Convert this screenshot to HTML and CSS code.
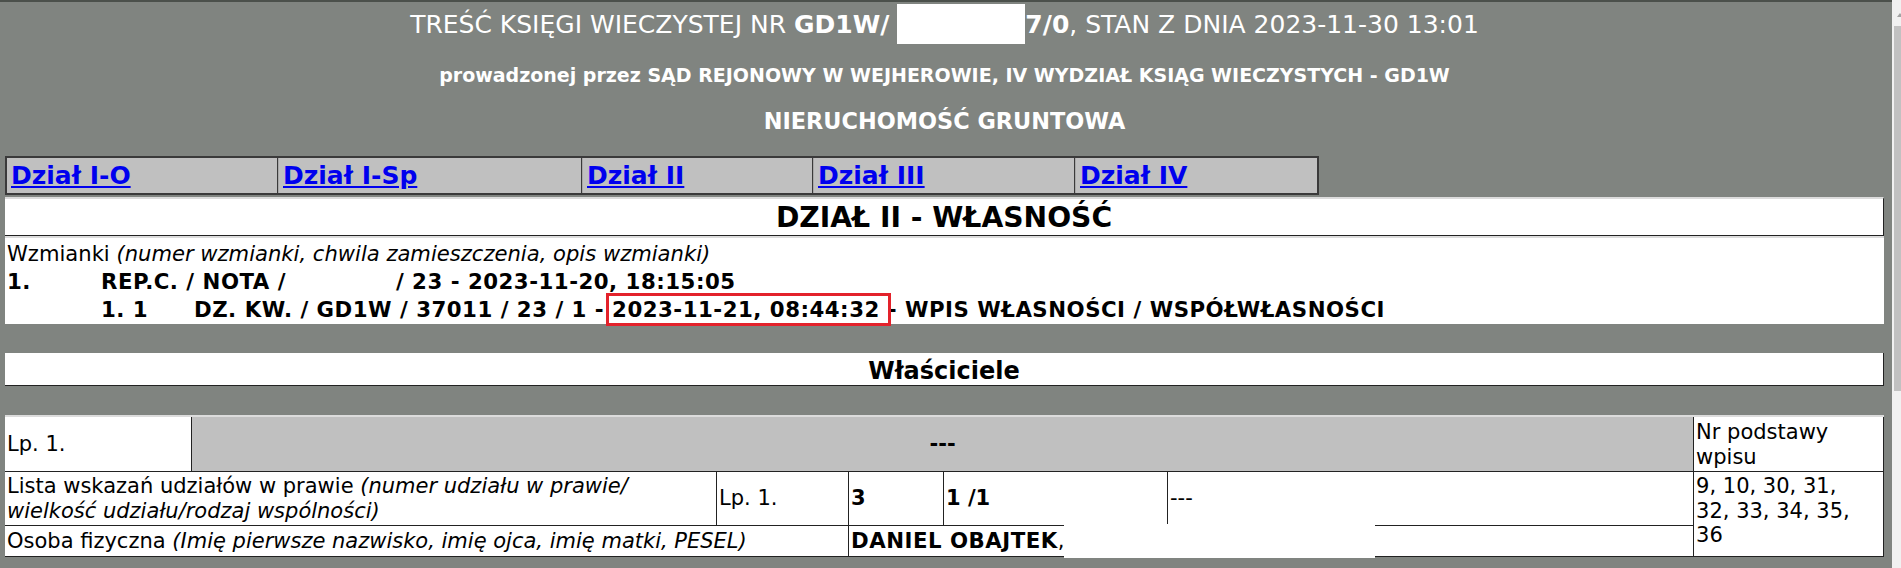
FILE: index.html
```html
<!DOCTYPE html>
<html lang="pl">
<head>
<meta charset="utf-8">
<title>Treść księgi wieczystej</title>
<link rel="stylesheet" href="styles.css">
</head>
<body>
<div class="scrollbar"><span class="scroll-arrow"></span><span class="scroll-thumb"></span></div>
<div class="page">
  <header class="doc-head">
    <h1 class="title">TREŚĆ KSIĘGI WIECZYSTEJ NR <b>GD1W/<span class="redact"></span>7/0</b>, STAN Z DNIA 2023-11-30 13:01</h1>
    <p class="court">prowadzonej przez SĄD REJONOWY W WEJHEROWIE, IV WYDZIAŁ KSIĄG WIECZYSTYCH - GD1W</p>
    <p class="kind">NIERUCHOMOŚĆ GRUNTOWA</p>
  </header>

  <nav class="tabs">
    <div class="tab t1"><a href="#">Dział I-O</a></div>
    <div class="tab t2"><a href="#">Dział I-Sp</a></div>
    <div class="tab t3"><a href="#">Dział II</a></div>
    <div class="tab t4"><a href="#">Dział III</a></div>
    <div class="tab t5"><a href="#">Dział IV</a></div>
  </nav>

  <div class="section-head">DZIAŁ II - WŁASNOŚĆ</div>

  <div class="wzmianki">
    <div class="wz-row wz-label">Wzmianki <i>(numer wzmianki, chwila zamieszczenia, opis wzmianki)</i></div>
    <div class="wz-row wz-entry">
      <span>1.</span>
      <span class="wz-wide">REP.C. / NOTA / <span class="blank"></span> / 23 - 2023-11-20, 18:15:05</span>
    </div>
    <div class="wz-row wz-entry">
      <span></span>
      <span>1. 1</span>
      <span>DZ. KW. / GD1W / 37011 / 23 / 1 - <span class="mark">2023-11-21, 08:44:32</span> - WPIS WŁASNOŚCI / WSPÓŁWŁASNOŚCI</span>
    </div>
  </div>

  <div class="sub-head">Właściciele</div>

  <table class="owners">
    <colgroup>
      <col class="ca"><col class="cb"><col class="cc"><col class="cd"><col class="ce"><col class="cf"><col class="cg">
    </colgroup>
    <tr class="r1">
      <td>Lp. 1.</td>
      <td colspan="5" class="grey"><b>---</b></td>
      <td>Nr podstawy wpisu</td>
    </tr>
    <tr class="r2">
      <td colspan="2">Lista wskazań udziałów w prawie <i>(numer udziału w prawie/ wielkość udziału/rodzaj wspólności)</i></td>
      <td>Lp. 1.</td>
      <td><b>3</b></td>
      <td><b>1 /1</b></td>
      <td>---</td>
      <td rowspan="2" class="basis">9, 10, 30, 31, 32, 33, 34, 35, 36</td>
    </tr>
    <tr class="r3">
      <td colspan="3">Osoba fizyczna <i>(Imię pierwsze nazwisko, imię ojca, imię matki, PESEL)</i></td>
      <td colspan="3"><b class="name">DANIEL OBAJTEK</b>,<span class="redact-name"></span></td>
    </tr>
  </table>
</div>
</body>
</html>
```
FILE: styles.css
```css
html, body {
  margin: 0;
  padding: 0;
  overflow: hidden;
}

body {
  background: #808480;
  border-top: 2px solid #4b504b;
  font-family: "DejaVu Sans", Verdana, sans-serif;
  color: #000;
  height: 566px;
}

.page {
  padding: 0 17px 0 5px;
}

/* ---------- header ---------- */
.doc-head {
  color: #fff;
  text-align: center;
}

.title {
  margin: 9px 0 0;
  font-size: 25px;
  line-height: 28px;
  font-weight: normal;
}

.redact {
  display: inline-block;
  width: 136px;
  height: 20px;
  position: relative;
}

.redact::after {
  content: "";
  position: absolute;
  left: 8px;
  right: 0;
  top: -9px;
  bottom: -11px;
  background: #fff;
}

.court {
  margin: 25px 0 0;
  font-size: 19px;
  line-height: 22px;
  font-weight: bold;
}

.kind {
  margin: 23px 0 0;
  font-size: 22.4px;
  line-height: 25px;
  font-weight: bold;
}

/* ---------- tabs ---------- */
.tabs {
  margin-top: 22px;
  display: grid;
  grid-template-columns: 270px 304px 231px 262px 243px;
  width: max-content;
  border: 2px solid #3a3a3a;
  background: #c0c0c0;
}

.tab {
  box-sizing: border-box;
  padding: 4px 4px 3px 5px;
  font-size: 25px;
  line-height: 28px;
  font-weight: bold;
  border-left: 1px solid #3a3a3a;
  box-shadow: inset 1px 0 0 #a8a8a8;
}

.tab.t1 {
  border-left: 0;
  padding-left: 4px;
  box-shadow: none;
}

.tab a {
  color: #0000ee;
  text-decoration: underline;
}

/* ---------- section heads ---------- */
.section-head {
  margin-top: 2px;
  background: #fff;
  border-top: 2px solid #dcdcdc;
  border-right: 1px solid #222;
  border-bottom: 1px solid #222;
  padding: 3px 0 2px;
  text-align: center;
  font-size: 28.2px;
  line-height: 31px;
  font-weight: bold;
}

.sub-head {
  margin-top: 29px;
  background: #fff;
  border-right: 1px solid #222;
  border-bottom: 1px solid #222;
  padding: 4px 0 0;
  text-align: center;
  font-size: 24px;
  line-height: 28px;
  font-weight: bold;
}

/* ---------- wzmianki ---------- */
.wzmianki {
  background: #fff;
  border-top: 2px solid #dcdcdc;
  padding: 2px 0 0 2px;
  font-size: 21.1px;
}

.wz-row {
  height: 28px;
  line-height: 28px;
  white-space: nowrap;
}

.wz-entry {
  display: grid;
  grid-template-columns: 94px 93px 1fr;
  font-weight: bold;
  font-size: 21.3px;
  letter-spacing: 0.5px;
}

.wz-wide {
  grid-column: 2 / 4;
}

.blank {
  display: inline-block;
  width: 94px;
}

.mark {
  position: relative;
}

.mark::after {
  content: "";
  position: absolute;
  left: -6px;
  right: -11px;
  top: -4px;
  bottom: -4px;
  border: 3px solid #e3222b;
}

/* ---------- owners table ---------- */
.owners {
  margin-top: 29px;
  width: 1879px;
  table-layout: fixed;
  border-collapse: separate;
  border-spacing: 0;
  border-top: 2px solid #dcdcdc;
  background: #fff;
  font-size: 21px;
  line-height: 24.5px;
}

.ca { width: 187px; }
.cb { width: 525px; }
.cc { width: 132px; }
.cd { width: 95px; }
.ce { width: 224px; }
.cf { width: 526px; }
.cg { width: 190px; }

.owners td {
  box-sizing: border-box;
  padding: 2px;
  border-right: 1px solid #222;
  border-bottom: 1px solid #222;
  vertical-align: middle;
  text-align: left;
}

.owners .r1 td {
  padding: 3px 2px 2px;
}

.owners td.grey {
  background: #c0c0c0;
  text-align: center;
}

.owners td.basis {
  vertical-align: top;
  padding-right: 12px;
}

.name {
  font-size: 21.3px;
  letter-spacing: 0.5px;
}

.redact-name {
  display: inline-block;
  width: 311px;
  height: 20px;
  position: relative;
}

.redact-name::after {
  content: "";
  position: absolute;
  left: 0;
  right: 0;
  top: -4px;
  bottom: -10px;
  background: #fff;
}

/* ---------- fake scrollbar ---------- */
.scrollbar {
  position: fixed;
  top: 0;
  right: 0;
  width: 9px;
  height: 100%;
  background: #f1f1f1;
}

.scroll-arrow {
  position: absolute;
  left: 5px;
  top: 13px;
  width: 0;
  height: 0;
  border-left: 3px solid transparent;
  border-right: 3px solid transparent;
  border-bottom: 4px solid #a3a3a3;
}

.scroll-thumb {
  position: absolute;
  left: 2px;
  right: 0;
  top: 26px;
  height: 365px;
  background: #c1c1c1;
}
```
